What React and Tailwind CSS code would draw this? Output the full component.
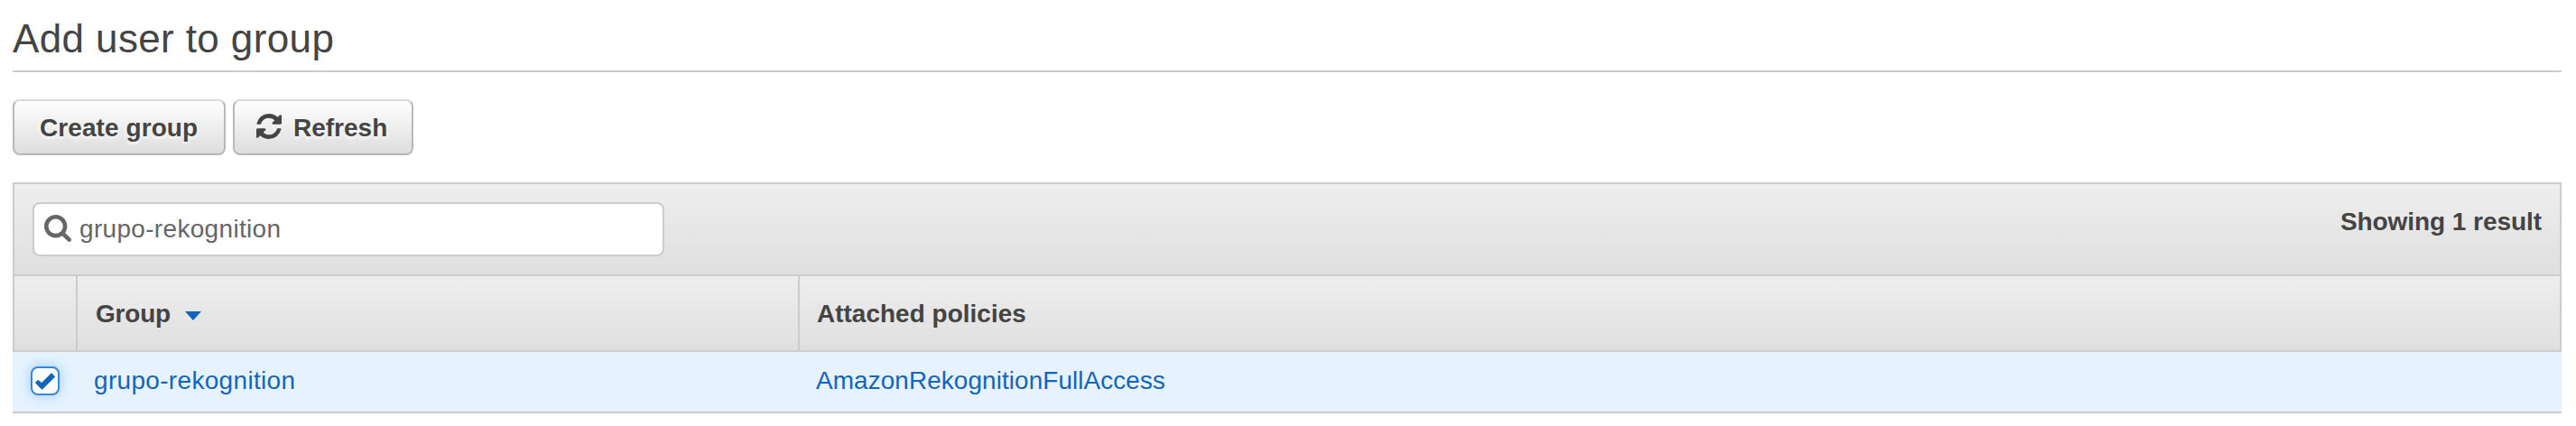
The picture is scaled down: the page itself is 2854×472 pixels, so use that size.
function RefreshIcon() {
  return (
    <svg viewBox="0 0 1536 1536" className="h-[28px] w-[28px] shrink-0" fill="currentColor" aria-hidden="true">
      <path d="M1511 928q0 5-1 7-64 268-268 434.500t-478 166.500q-146 0-282.500-55t-243.500-157l-129 129q-19 19-45 19t-45-19-19-45v-448q0-26 19-45t45-19h448q26 0 45 19t19 45-19 45l-137 137q71 66 161 102t187 36q134 0 250-65t186-179q11-17 53-117 8-23 30-23h192q13 0 22.500 9.500t9.500 22.500zm25-800v448q0 26-19 45t-45 19h-448q-26 0-45-19t-19-45 19-45l138-138q-148-137-349-137-134 0-250 65t-186 179q-11 17-53 117-8 23-30 23h-199q-13 0-22.500-9.500t-9.500-22.500v-7q65-268 270-434.500t480-166.500q146 0 284 55.500t245 156.500l130-129q19-19 45-19t45 19 19 45z" />
    </svg>
  );
}

function SearchIcon() {
  return (
    <svg viewBox="64 128 1664 1664" className="h-[30px] w-[30px] shrink-0" fill="currentColor" aria-hidden="true">
      <path d="M1216 832q0-185-131.500-316.500t-316.500-131.500-316.500 131.500-131.500 316.500 131.500 316.500 316.500 131.500 316.500-131.500 131.500-316.500zm512 832q0 52-38 90t-90 38q-54 0-90-38l-343-342q-179 124-399 124-143 0-273.500-55.500t-225-150-150-225-55.500-273.500 55.500-273.500 150-225 225-150 273.500-55.500 273.500 55.500 225 150 150 225 55.500 273.500q0 220-124 399l343 343q37 37 37 90z" />
    </svg>
  );
}

function CheckIcon() {
  return (
    <svg viewBox="0 0 22 19" className="h-[19px] w-[22px]" fill="currentColor" stroke="currentColor" aria-hidden="true">
      <path d="M1.100 11 3.200 9 7.200 12.200 18 1.400 21 4.300 7.600 17.500z" strokeWidth="1.800" strokeLinejoin="round" />
    </svg>
  );
}

const buttonClass =
  "flex h-[62px] items-center rounded-[8px] border-2 border-[#b8b8b8] border-t-[#d9d9d9] bg-linear-to-b from-white to-[#dddddd] pt-[2px] font-bold leading-[40px] [text-shadow:0_2px_4px_#ffffff]";

export default function App() {
  return (
    <main className="h-[472px] bg-white px-[14px] pt-[15px] pr-[16px] font-['Liberation_Sans',Arial,sans-serif] text-[28px] leading-[40px] text-[#444444]">
      <h1 className="h-[65px] border-b-2 border-[#cccccc] text-[44px] leading-[56px] tracking-[0.38px]">
        Add user to group
      </h1>

      <div className="mt-[30px] flex gap-[8px]">
        <button className={`${buttonClass} w-[236px] pl-[28px] tracking-[0.08px]`}>Create group</button>
        <button className={`${buttonClass} w-[200px] gap-[13px] pl-[24px]`}>
          <span className="-mt-[4px]"><RefreshIcon /></span>
          Refresh
        </button>
      </div>

      <section className="mt-[30px]">
        <div className="flex h-[104px] justify-between border-2 border-[#cccccc] bg-linear-to-b from-[#eeeeee] to-[#dfdfdf] px-[20px] pt-[20px]">
          <div className="flex h-[60px] w-[700px] items-center gap-[9px] rounded-[8px] border-2 border-[#cccccc] bg-white pl-[11px] text-[#666666]">
            <span className="-mt-[2px]"><SearchIcon /></span>
            <span className="tracking-[0.32px]">grupo-rekognition</span>
          </div>
          <div className="pt-[2px] font-bold tracking-[-0.06px]">Showing 1 result</div>
        </div>

        <div className="flex h-[84px] border-x-2 border-b-2 border-[#cccccc] bg-linear-to-b from-[#eeeeee] to-[#dfdfdf] font-bold">
          <div className="w-[70px] border-r-2 border-[#cccccc]" />
          <div className="flex w-[800px] items-center gap-[16px] border-r-2 border-[#cccccc] pt-[2px] pl-[20px]">
            <span className="tracking-[-0.2px]">Group</span>
            <svg viewBox="0 0 18 10" className="mt-[3px] h-[10px] w-[18px]" fill="#1166bb" aria-hidden="true">
              <path d="M0 0h18L9 10z" />
            </svg>
          </div>
          <div className="flex items-center pt-[2px] pl-[19px]">Attached policies</div>
        </div>

        <div className="flex h-[68px] border-b-2 border-[#cccccc] bg-[#e6f3ff] pt-[12px] text-[#1166bb]">
          <div className="w-[90px] pt-[4px] pl-[20px]">
            <span className="flex h-[32px] w-[32px] items-center justify-center rounded-[8px] border-2 border-[#3388dd] bg-white shadow-[0_0_14px_#99c8f5]">
              <CheckIcon />
            </span>
          </div>
          <div className="w-[800px] tracking-[0.32px]">grupo-rekognition</div>
          <div className="tracking-[0.04px]">AmazonRekognitionFullAccess</div>
        </div>
      </section>
    </main>
  );
}
